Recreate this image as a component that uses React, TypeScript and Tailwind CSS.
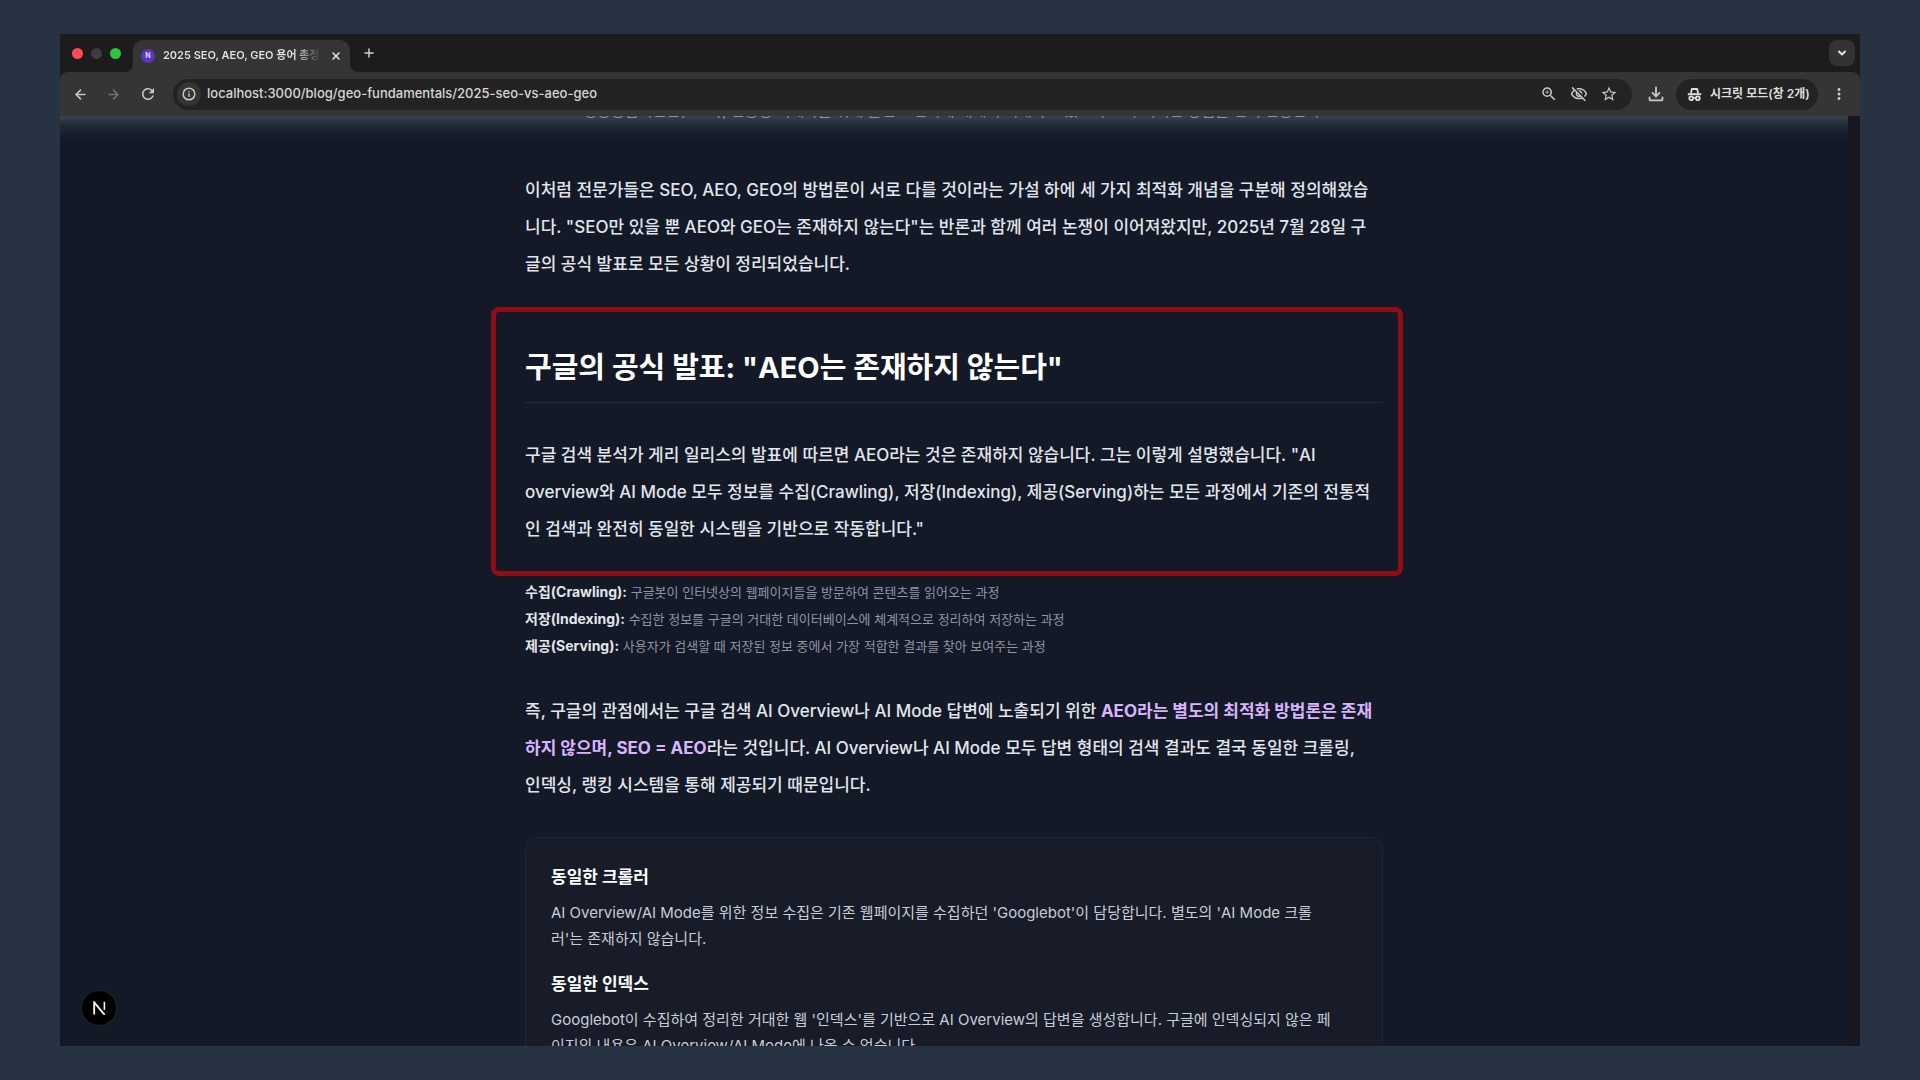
import { ArrowLeft, ArrowRight, ChevronDown, Info, Plus, X } from "lucide-react";
import {
  MdMoreVert,
  MdOutlineFileDownload,
  MdOutlineVisibilityOff,
  MdRefresh,
  MdStarBorder,
  MdZoomIn,
} from "react-icons/md";

const paragraph = "text-[17px] leading-[37px] font-medium text-[#e2e5ec]";

const terms = [
  { name: "수집(Crawling):", text: "구글봇이 인터넷상의 웹페이지들을 방문하여 콘텐츠를 읽어오는 과정" },
  { name: "저장(Indexing):", text: "수집한 정보를 구글의 거대한 데이터베이스에 체계적으로 정리하여 저장하는 과정" },
  { name: "제공(Serving):", text: "사용자가 검색할 때 저장된 정보 중에서 가장 적합한 결과를 찾아 보여주는 과정" },
];

const cards = [
  {
    title: "동일한 크롤러",
    lines: [
      "AI Overview/AI Mode를 위한 정보 수집은 기존 웹페이지를 수집하던 'Googlebot'이 담당합니다. 별도의 'AI Mode 크롤",
      "러'는 존재하지 않습니다.",
    ],
  },
  {
    title: "동일한 인덱스",
    lines: [
      "Googlebot이 수집하여 정리한 거대한 웹 '인덱스'를 기반으로 AI Overview의 답변을 생성합니다. 구글에 인덱싱되지 않은 페",
      "이지의 내용은 AI Overview/AI Mode에 나올 수 없습니다.",
    ],
  },
];

function IncognitoIcon() {
  return (
    <svg width="15" height="15" viewBox="0 0 15 15" fill="none" stroke="currentColor">
      <path d="M4 6.2 4.8 2h5.4L11 6.2" strokeWidth="1.8" strokeLinejoin="round" />
      <path d="M.8 7.2h13.4" strokeWidth="2" />
      <circle cx="4.2" cy="11.3" r="1.9" strokeWidth="1.8" />
      <circle cx="10.8" cy="11.3" r="1.9" strokeWidth="1.8" />
      <path d="M6 10.8h3" strokeWidth="1.5" />
    </svg>
  );
}

function TabStrip() {
  return (
    <div className="flex h-[38px] items-end">
      <div className="flex h-full items-center gap-2 pl-3">
        <span className="size-[11px] rounded-full bg-[#fe4b53]" />
        <span className="size-[11px] rounded-full bg-[#3d3d3d]" />
        <span className="size-[11px] rounded-full bg-[#2ac63f]" />
      </div>
      <div className="relative ml-3 flex h-8 w-[217px] items-center rounded-t-[10px] bg-[#353535] pr-2 pl-2">
        {/* curved feet of the active tab */}
        <svg className="absolute bottom-0 -left-2" width="8" height="8" viewBox="0 0 8 8">
          <path d="M8 0v8H0a8 8 0 0 0 8-8Z" fill="#353535" />
        </svg>
        <svg className="absolute -right-2 bottom-0" width="8" height="8" viewBox="0 0 8 8">
          <path d="M0 0v8h8a8 8 0 0 1-8-8Z" fill="#353535" />
        </svg>
        <span className="flex size-[14px] items-center justify-center rounded-full bg-[#5b36b8] text-[7px] font-bold text-violet-200">
          N
        </span>
        <span className="ml-2 w-[158px] overflow-hidden bg-linear-to-r from-[#e6e6e6] from-82% to-transparent bg-clip-text pb-px text-[11px] font-semibold whitespace-nowrap text-transparent">
          2025 SEO, AEO, GEO 용어 총정리
        </span>
        <button aria-label="탭 닫기" className="ml-auto text-[#e3e3e3]">
          <X size={12} strokeWidth={3} />
        </button>
      </div>
      <button aria-label="새 탭" className="mb-3 ml-3 text-[#d0d0d0]">
        <Plus size={14} strokeWidth={2.5} />
      </button>
      <button
        aria-label="탭 검색"
        className="mr-[5px] mb-[6px] ml-auto flex size-[26px] items-center justify-center rounded-lg bg-[#333333] text-[#e3e3e3]"
      >
        <ChevronDown size={12} strokeWidth={4} />
      </button>
    </div>
  );
}

function Toolbar() {
  return (
    <div className="flex h-[44px] items-center rounded-t-lg bg-[#353535] pr-3 pl-[13px] text-[#c8c8c8]">
      <button aria-label="뒤로">
        <ArrowLeft size={15} strokeWidth={2.5} />
      </button>
      <button aria-label="앞으로" className="ml-[18px] text-[#707070]">
        <ArrowRight size={15} strokeWidth={2.5} />
      </button>
      <button aria-label="새로고침" className="ml-[18px]">
        <MdRefresh size={18} />
      </button>
      <div className="ml-4 flex h-[31px] flex-1 items-center rounded-full bg-[#232323] pr-[14px] pl-1">
        <span className="flex size-6 items-center justify-center rounded-full bg-[#343434]">
          <Info size={14} strokeWidth={2.5} />
        </span>
        <input
          aria-label="주소"
          className="ml-[6px] flex-1 bg-transparent text-[13px] font-medium text-[#d6d6d6] outline-none"
          defaultValue="localhost:3000/blog/geo-fundamentals/2025-seo-vs-aeo-geo"
        />
        <div className="flex items-center gap-3">
          <MdZoomIn size={18} />
          <MdOutlineVisibilityOff size={18} />
          <MdStarBorder size={18} />
        </div>
      </div>
      <button aria-label="다운로드" className="ml-[13px]">
        <MdOutlineFileDownload size={22} />
      </button>
      <div className="ml-[9px] flex h-[31px] w-[142px] items-center gap-2 rounded-full bg-[#232323] pl-[11px] text-[12px] font-semibold whitespace-nowrap text-[#dedede]">
        <IncognitoIcon />
        시크릿 모드(창 2개)
      </div>
      <button aria-label="메뉴" className="ml-3">
        <MdMoreVert size={18} />
      </button>
    </div>
  );
}

function Article() {
  return (
    <article className="relative z-10 mx-auto w-[858px] whitespace-nowrap">
      <p className="-mt-[18px] pl-[58px] text-[15px] leading-[26px] text-[#8c93a3]">
        생성형검색엔진(GEO), 인용형 객체화를 위해 콘텐츠 전략에 대해서 이해하고 있으며 AI가 이러한 방법을 먼저 인용한다
      </p>
      <p className={`${paragraph} mt-12`}>
        이처럼 전문가들은 SEO, AEO, GEO의 방법론이 서로 다를 것이라는 가설 하에 세 가지 최적화 개념을 구분해 정의해왔습
        <br />
        니다. "SEO만 있을 뿐 AEO와 GEO는 존재하지 않는다"는 반론과 함께 여러 논쟁이 이어져왔지만, 2025년 7월 28일 구
        <br />
        글의 공식 발표로 모든 상황이 정리되었습니다.
      </p>

      <section className="mt-6 -mr-5 -ml-[34px] rounded-lg border-[5px] border-[#8e0d17] pt-[34px] pr-[15px] pb-[23px] pl-[29px]">
        <h2 className="border-b border-[#2b2645] pb-3 text-[29px] leading-[44px] font-bold text-white">
          구글의 공식 발표: "AEO는 존재하지 않는다"
        </h2>
        <p className={`${paragraph} mt-[34px]`}>
          구글 검색 분석가 게리 일리스의 발표에 따르면 AEO라는 것은 존재하지 않습니다. 그는 이렇게 설명했습니다. "AI
          <br />
          overview와 AI Mode 모두 정보를 수집(Crawling), 저장(Indexing), 제공(Serving)하는 모든 과정에서 기존의 전통적
          <br />
          인 검색과 완전히 동일한 시스템을 기반으로 작동합니다."
        </p>
      </section>

      <ul className="mt-[3px] text-[13px] leading-[27px] text-[#8f95a3]">
        {terms.map((term) => (
          <li key={term.name}>
            <strong className="text-[14px] leading-none font-bold text-[#e2e5ec]">{term.name}</strong>{" "}
            {term.text}
          </li>
        ))}
      </ul>

      <p className={`${paragraph} mt-[33px]`}>
        즉, 구글의 관점에서는 구글 검색 AI Overview나 AI Mode 답변에 노출되기 위한{" "}
        <strong className="font-bold text-[#d8b4fe]">AEO라는 별도의 최적화 방법론은 존재</strong>
        <br />
        <strong className="font-bold text-[#d8b4fe]">하지 않으며, SEO = AEO</strong>
        라는 것입니다. AI Overview나 AI Mode 모두 답변 형태의 검색 결과도 결국 동일한 크롤링,
        <br />
        인덱싱, 랭킹 시스템을 통해 제공되기 때문입니다.
      </p>

      <div className="mt-[33px] flex flex-col gap-[17px] rounded-xl border border-[#1e2533] bg-[#171c28] px-[25px] py-6">
        {cards.map((card) => (
          <section key={card.title}>
            <h3 className="text-[17px] leading-[30px] font-bold text-white">{card.title}</h3>
            <p className="mt-2 text-[15px] leading-[26px] text-[#c9cdd6]">
              {card.lines[0]}
              <br />
              {card.lines[1]}
            </p>
          </section>
        ))}
      </div>
    </article>
  );
}

export default function App() {
  return (
    <div className="h-screen overflow-hidden bg-[#273243] px-[60px] py-[34px] font-['Inter','Noto_Sans_CJK_KR',sans-serif]">
      <div className="relative flex h-full flex-col overflow-hidden bg-[#131926]">
        <header className="bg-[#1c1c1c]">
          <TabStrip />
          <Toolbar />
        </header>
        <main className="relative flex-1 overflow-hidden pr-3">
          <Article />
          <div className="absolute top-0 right-3 left-0 h-6 bg-linear-to-b from-[#3d414d] via-[#202936] via-40% to-transparent" />
          <div className="absolute inset-y-0 right-0 w-3 bg-[#171722]" />
        </main>
        <button
          aria-label="Next.js"
          className="absolute bottom-5 left-[21px] flex size-[36px] items-center justify-center rounded-full border border-[#22252c] bg-black"
        >
          <svg width="13" height="14" viewBox="0 0 13 14" fill="none" stroke="white" strokeWidth="1.8">
            <path d="M1.2 13.5V1.3L11.6 13.8" />
            <path d="M11.4 .8v8" strokeWidth="1.6" />
          </svg>
        </button>
      </div>
    </div>
  );
}
